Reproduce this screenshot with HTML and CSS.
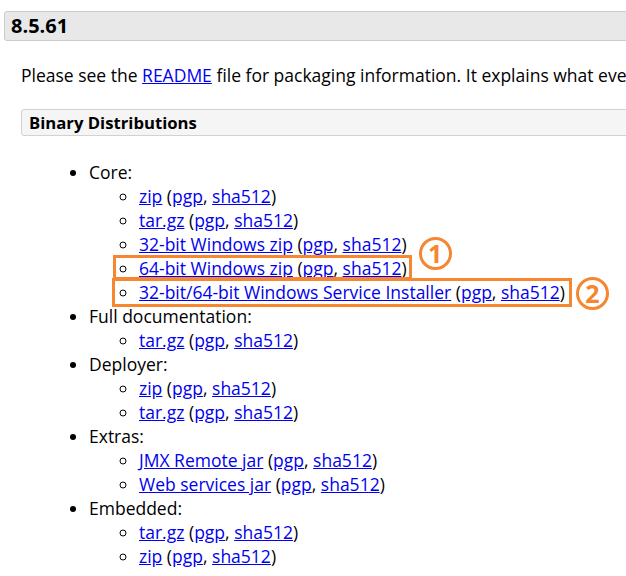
FILE: index.html
```html
<!doctype html>
<html lang="en">
    <head>
        <title>Tomcat 8 Downloads</title>
        <link rel="stylesheet" href="styles.css">
    </head>
    <body>
        <div class="page">
            <h2 class="release-title">8.5.61</h2>
            <div class="release-body">
                <p class="intro">
                    Please see the <a href="#">README</a> file for packaging
                    information. It explains what every distribution contains.
                </p>
                <h3 class="section-title">Binary Distributions</h3>
                <ul class="dist-list">
                    <li>Core:
                        <ul>
                            <li><a href="#">zip</a> (<a href="#">pgp</a>, <a href="#">sha512</a>)</li>
                            <li><a href="#">tar.gz</a> (<a href="#">pgp</a>, <a href="#">sha512</a>)</li>
                            <li><a href="#">32-bit Windows zip</a> (<a href="#">pgp</a>, <a href="#">sha512</a>)</li>
                            <li class="mark mark-one">
                                <a href="#">64-bit Windows zip</a> (<a href="#">pgp</a>, <a href="#">sha512</a>)
                                <span class="mark-box"></span>
                                <span class="badge">1</span>
                            </li>
                            <li class="mark mark-two">
                                <a href="#">32-bit/64-bit Windows Service Installer</a> (<a href="#">pgp</a>, <a href="#">sha512</a>)
                                <span class="mark-box"></span>
                                <span class="badge">2</span>
                            </li>
                        </ul>
                    </li>
                    <li>Full documentation:
                        <ul>
                            <li><a href="#">tar.gz</a> (<a href="#">pgp</a>, <a href="#">sha512</a>)</li>
                        </ul>
                    </li>
                    <li>Deployer:
                        <ul>
                            <li><a href="#">zip</a> (<a href="#">pgp</a>, <a href="#">sha512</a>)</li>
                            <li><a href="#">tar.gz</a> (<a href="#">pgp</a>, <a href="#">sha512</a>)</li>
                        </ul>
                    </li>
                    <li>Extras:
                        <ul>
                            <li><a href="#">JMX Remote jar</a> (<a href="#">pgp</a>, <a href="#">sha512</a>)</li>
                            <li><a href="#">Web services jar</a> (<a href="#">pgp</a>, <a href="#">sha512</a>)</li>
                        </ul>
                    </li>
                    <li>Embedded:
                        <ul>
                            <li><a href="#">tar.gz</a> (<a href="#">pgp</a>, <a href="#">sha512</a>)</li>
                            <li><a href="#">zip</a> (<a href="#">pgp</a>, <a href="#">sha512</a>)</li>
                        </ul>
                    </li>
                </ul>
            </div>
        </div>
    </body>
</html>
```

FILE: styles.css
```css
body {
    font-family: "Open Sans", "Liberation Sans", sans-serif;
    font-size: 17.5px;
    line-height: 24px;
    color: #000;
    background: #fff;
    margin: 0;
    overflow: hidden;
}
.page {
    width: 1000px;
    padding: 11px 0 0 4px;
}
a {
    color: #0000ee;
}
.release-title {
    margin: 0;
    padding: 1px 6px;
    font-size: 20px;
    line-height: 26px;
    font-weight: 700;
    background: #e8e8e8;
    border: 1px solid #ccc;
    border-radius: 3px;
}
.release-body {
    padding-left: 17px;
}
.intro {
    margin: 22px 0;
}
.section-title {
    margin: 0;
    padding: 0 7px;
    font-size: 16.7px;
    line-height: 25px;
    font-weight: 700;
    background: #f5f5f5;
    border: 1px solid #d2d2d2;
    border-radius: 3px;
}
.dist-list {
    margin: 24px 0 0;
    padding-left: 68px;
    list-style: disc;
}
.dist-list ul {
    margin: 0;
    padding-left: 50px;
    list-style: circle;
}
/* highlighted rows */
.mark {
    position: relative;
    width: fit-content;
}
.mark-box {
    position: absolute;
    border: 3px solid #f6862f;
    pointer-events: none;
}
.mark-one .mark-box {
    left: -26px;
    right: -5px;
    top: -1px;
    bottom: 0;
}
.mark-two .mark-box {
    left: -27px;
    right: -7px;
    top: -2px;
    bottom: -3px;
}
.badge {
    position: absolute;
    width: 27px;
    height: 27px;
    border: 3px solid #f6862f;
    border-radius: 50%;
    color: #f6862f;
    font-size: 25px;
    font-weight: 700;
    line-height: 27px;
    text-align: center;
}
.mark-one .badge {
    right: -45px;
    top: -19px;
}
.mark-two .badge {
    right: -44px;
    top: -3px;
}
```
